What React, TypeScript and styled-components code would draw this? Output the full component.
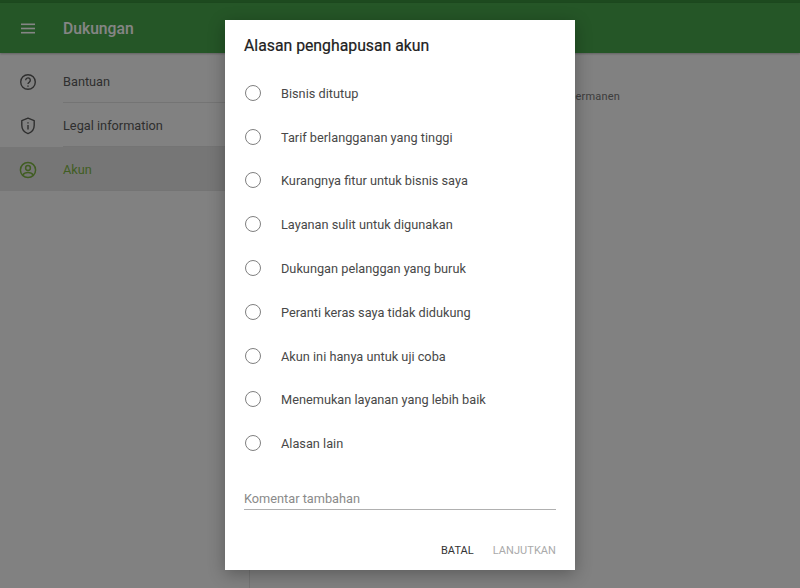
import React from 'react';
import styled, { createGlobalStyle } from 'styled-components';

const reasons = [
    'Bisnis ditutup',
    'Tarif berlangganan yang tinggi',
    'Kurangnya fitur untuk bisnis saya',
    'Layanan sulit untuk digunakan',
    'Dukungan pelanggan yang buruk',
    'Peranti keras saya tidak didukung',
    'Akun ini hanya untuk uji coba',
    'Menemukan layanan yang lebih baik',
    'Alasan lain',
];

const MenuIcon = () => (
    <svg width="14" height="11" viewBox="0 0 14 11" fill="currentColor">
        <rect y="0.5" width="14" height="1.6" />
        <rect y="4.7" width="14" height="1.6" />
        <rect y="8.9" width="14" height="1.6" />
    </svg>
);

const HelpIcon = () => (
    <svg width="18" height="18" viewBox="0 0 18 18" fill="none" stroke="currentColor" strokeWidth="1.4">
        <circle cx="9" cy="9" r="7.3" />
        <path d="M6.7 7.2a2.3 2.3 0 1 1 3.6 1.9c-.8.5-1.3 1-1.3 2" />
        <path d="M9 12.4v1.3" />
    </svg>
);

const ShieldIcon = () => (
    <svg width="18" height="18" viewBox="0 0 18 18" fill="none" stroke="currentColor" strokeWidth="1.4">
        <path d="M9 1.2 2.8 3.6v4.7c0 3.9 2.6 7.1 6.2 8.3 3.6-1.2 6.2-4.4 6.2-8.3V3.6z" strokeLinejoin="round" />
        <path d="M9 8v4.4M9 5.2v1.4" />
    </svg>
);

const AccountIcon = () => (
    <svg width="18" height="18" viewBox="0 0 18 18" fill="none" stroke="currentColor" strokeWidth="1.5">
        <circle cx="9" cy="9" r="7.6" />
        <circle cx="9" cy="7" r="2.4" />
        <path d="M3.9 13.9c1-1.6 3-2.4 5.1-2.4s4.1 0.8 5.1 2.4" />
    </svg>
);

export default function App() {
    return (
        <Page>
            <GlobalStyle />
            <StatusBar />
            <Toolbar>
                <MenuButton>
                    <MenuIcon />
                </MenuButton>
                <ToolbarTitle>Dukungan</ToolbarTitle>
            </Toolbar>
            <Body>
                <Sidebar>
                    <NavItem>
                        <NavIcon>
                            <HelpIcon />
                        </NavIcon>
                        <NavLabel>Bantuan</NavLabel>
                    </NavItem>
                    <NavItem>
                        <NavIcon>
                            <ShieldIcon />
                        </NavIcon>
                        <NavLabel>Legal information</NavLabel>
                    </NavItem>
                    <NavItem selected>
                        <NavIcon>
                            <AccountIcon />
                        </NavIcon>
                        <NavLabel>Akun</NavLabel>
                    </NavItem>
                </Sidebar>
                <Content>
                    <ContentText>Hapus akun Anda secara permanen</ContentText>
                </Content>
            </Body>
            <Scrim>
                <Dialog>
                    <DialogTitle>Alasan penghapusan akun</DialogTitle>
                    <ReasonList>
                        {reasons.map((reason) => (
                            <Reason key={reason}>
                                <Radio />
                                <ReasonLabel>{reason}</ReasonLabel>
                            </Reason>
                        ))}
                    </ReasonList>
                    <CommentField>Komentar tambahan</CommentField>
                    <Actions>
                        <ActionButton>BATAL</ActionButton>
                        <ActionButton disabled>LANJUTKAN</ActionButton>
                    </Actions>
                </Dialog>
            </Scrim>
        </Page>
    );
}

const GlobalStyle = createGlobalStyle`
    html, body {
        margin: 0;
        height: 100%;
    }

    body {
        font-family: Roboto, "Liberation Sans", sans-serif;
    }
`;

const Page = styled.div`
    position: relative;
    display: flex;
    flex-direction: column;
    width: 800px;
    height: 588px;
    overflow: hidden;
    background: #f8f8f8;
`;

const StatusBar = styled.div`
    height: 3px;
    background: #388e3c;
`;

const Toolbar = styled.div`
    display: flex;
    align-items: center;
    height: 50px;
    background: #48a64c;
    color: #fff;
    box-shadow: 0 1px 2px rgba(0, 0, 0, 0.25);
`;

const MenuButton = styled.div`
    display: flex;
    justify-content: center;
    width: 56px;
`;

const ToolbarTitle = styled.div`
    margin-left: 7px;
    font-size: 15.7px;
    font-weight: 500;
`;

const Body = styled.div`
    display: flex;
    flex: 1;
`;

const Sidebar = styled.div`
    width: 249px;
    padding-top: 6px;
    border-right: 1px solid #e0e0e0;
`;

const NavItem = styled.div<{ selected?: boolean }>`
    display: flex;
    align-items: center;
    height: 44px;
    background: ${({ selected }) => (selected ? '#e3e3e3' : 'transparent')};
    color: ${({ selected }) => (selected ? '#7cb342' : '#5a5a5a')};
`;

const NavIcon = styled.div`
    display: flex;
    justify-content: center;
    width: 56px;
    padding-top: 1px;
`;

const NavLabel = styled.div`
    flex: 1;
    align-self: stretch;
    display: flex;
    align-items: center;
    box-sizing: border-box;
    margin-left: 7px;
    padding-top: 2px;
    font-size: 12.75px;
    border-bottom: 1px solid #dfdfdf;
`;

const Content = styled.div`
    flex: 1;
    padding-top: 37px;
`;

const ContentText = styled.div`
    margin-left: 190px;
    font-size: 11px;
    letter-spacing: 0.2px;
    color: #757575;
`;

const Scrim = styled.div`
    position: absolute;
    inset: 0;
    display: flex;
    justify-content: center;
    background: rgba(0, 0, 0, 0.48);
`;

const Dialog = styled.div`
    display: flex;
    flex-direction: column;
    box-sizing: border-box;
    width: 350px;
    height: 550px;
    margin-top: 20px;
    padding: 0 19px;
    background: #fff;
    box-shadow: 0 4px 16px rgba(0, 0, 0, 0.3);
`;

const DialogTitle = styled.div`
    margin-top: 16px;
    font-size: 15.8px;
    line-height: 20px;
    color: #212121;
    -webkit-text-stroke: 0.2px #212121;
`;

const ReasonList = styled.div`
    display: flex;
    flex-direction: column;
    margin-top: 15px;
`;

const Reason = styled.div`
    display: flex;
    align-items: center;
    height: 43.8px;
`;

const Radio = styled.div`
    box-sizing: border-box;
    width: 16px;
    height: 16px;
    margin-left: 1px;
    border: 1.7px solid #808080;
    border-radius: 50%;
`;

const ReasonLabel = styled.div`
    margin-left: 20px;
    padding-top: 1px;
    font-size: 12.75px;
    color: #484848;
`;

const CommentField = styled.div`
    margin-top: 25px;
    padding-bottom: 1px;
    font-size: 12.75px;
    line-height: 18px;
    color: #8a8a8a;
    border-bottom: 1px solid #b0b0b0;
`;

const Actions = styled.div`
    display: flex;
    justify-content: flex-end;
    gap: 19px;
    margin-top: 28px;
`;

const ActionButton = styled.div<{ disabled?: boolean }>`
    font-size: 11px;
    line-height: 26px;
    letter-spacing: 0.05px;
    color: ${({ disabled }) => (disabled ? '#aaaaaa' : '#333333')};
`;
